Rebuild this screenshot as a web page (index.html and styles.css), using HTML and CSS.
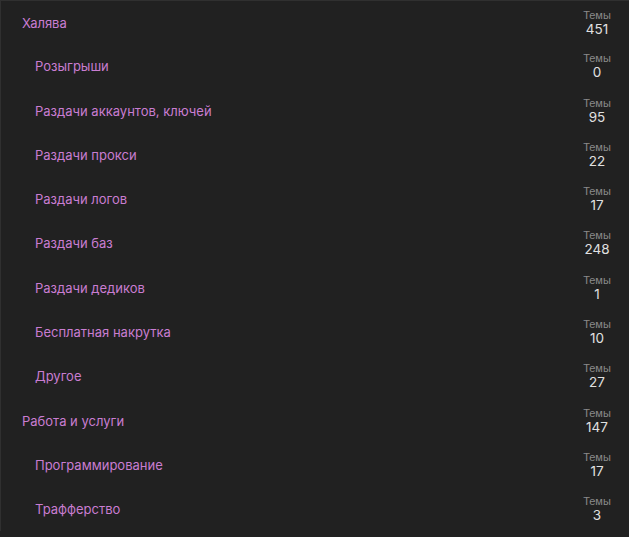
FILE: index.html
```html
<!DOCTYPE html>
<html lang="ru">
<head>
<meta charset="utf-8">
<title>Форум</title>
<link rel="stylesheet" href="styles.css">
</head>
<body>
<div class="list">
  <div class="row lvl1"><a class="title">Халява</a><div class="stat"><span class="label">Темы</span><span class="num">451</span></div></div>
  <div class="row lvl2"><a class="title">Розыгрыши</a><div class="stat"><span class="label">Темы</span><span class="num">0</span></div></div>
  <div class="row lvl2"><a class="title">Раздачи аккаунтов, ключей</a><div class="stat"><span class="label">Темы</span><span class="num">95</span></div></div>
  <div class="row lvl2"><a class="title">Раздачи прокси</a><div class="stat"><span class="label">Темы</span><span class="num">22</span></div></div>
  <div class="row lvl2"><a class="title">Раздачи логов</a><div class="stat"><span class="label">Темы</span><span class="num">17</span></div></div>
  <div class="row lvl2"><a class="title">Раздачи баз</a><div class="stat"><span class="label">Темы</span><span class="num">248</span></div></div>
  <div class="row lvl2"><a class="title">Раздачи дедиков</a><div class="stat"><span class="label">Темы</span><span class="num">1</span></div></div>
  <div class="row lvl2"><a class="title">Бесплатная накрутка</a><div class="stat"><span class="label">Темы</span><span class="num">10</span></div></div>
  <div class="row lvl2"><a class="title">Другое</a><div class="stat"><span class="label">Темы</span><span class="num">27</span></div></div>
  <div class="row lvl1"><a class="title">Работа и услуги</a><div class="stat"><span class="label">Темы</span><span class="num">147</span></div></div>
  <div class="row lvl2"><a class="title">Программирование</a><div class="stat"><span class="label">Темы</span><span class="num">17</span></div></div>
  <div class="row lvl2"><a class="title">Трафферство</a><div class="stat"><span class="label">Темы</span><span class="num">3</span></div></div>
</div>
</body>
</html>
```
FILE: styles.css
```css
html, body {
  margin: 0;
  padding: 0;
  background: #212121;
}
body {
  height: 537px;
  overflow: hidden;
}
.list {
  border-top: 1px solid #303030;
  border-left: 1px solid #303030;
  display: flex;
  flex-direction: column;
}
.row {
  height: 44.27px;
  display: flex;
  align-items: center;
  justify-content: space-between;
  padding-right: 17px;
}
.row:first-child {
  height: 43.27px;
}
.lvl1 { padding-left: 21px; }
.lvl2 { padding-left: 34px; }
.title {
  font-family: Inter, Roboto, sans-serif;
  font-size: 13px;
  color: #c97dd1;
  text-decoration: none;
}
.stat {
  width: 30px;
  display: flex;
  flex-direction: column;
  align-items: center;
}
.label {
  font-family: "Liberation Sans", Arial, sans-serif;
  font-size: 11px;
  line-height: 13px;
  color: #8a8a8a;
}
.num {
  font-family: Inter, "Liberation Sans", sans-serif;
  font-size: 13.5px;
  line-height: 15px;
  color: #e0e0e0;
}
```
